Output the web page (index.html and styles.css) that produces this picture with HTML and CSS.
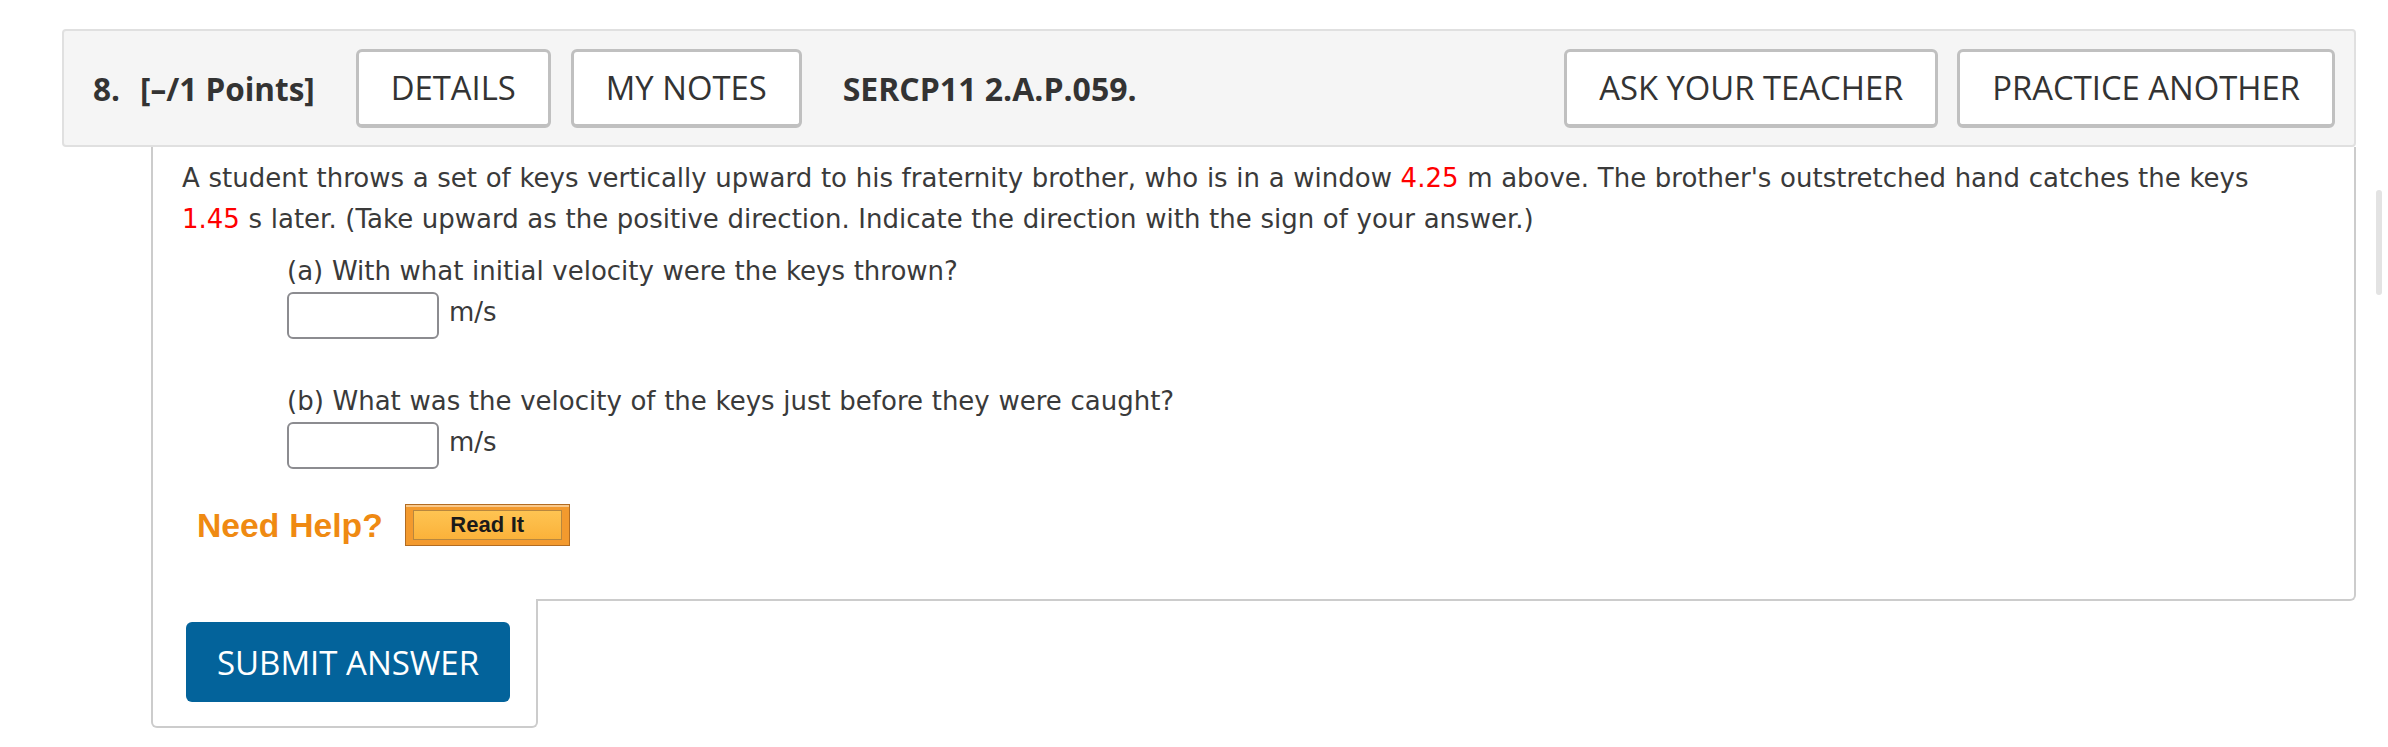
FILE: index.html
```html
<!DOCTYPE html>
<html lang="en">
<head>
<meta charset="utf-8">
<title>Question 8</title>
<link rel="stylesheet" href="styles.css">
</head>
<body>
<div class="page">
  <div class="qheader">
    <span class="qnum">8.</span>
    <span class="qpoints">[–/1 Points]</span>
    <button class="hbtn details">DETAILS</button>
    <button class="hbtn notes">MY NOTES</button>
    <span class="qid">SERCP11 2.A.P.059.</span>
    <button class="hbtn ask">ASK YOUR TEACHER</button>
    <button class="hbtn practice">PRACTICE ANOTHER</button>
  </div>
  <div class="qbody">
    <p class="stem">A student throws a set of keys vertically upward to his fraternity brother, who is in a window <span class="num">4.25</span> m above. The brother's outstretched hand catches the keys <span class="num">1.45</span> s later. (Take upward as the positive direction. Indicate the direction with the sign of your answer.)</p>
    <div class="part part-a">
      <div class="ptext">(a) With what initial velocity were the keys thrown?</div>
      <div class="answer"><span class="field"></span><span class="unit">m/s</span></div>
    </div>
    <div class="part part-b">
      <div class="ptext">(b) What was the velocity of the keys just before they were caught?</div>
      <div class="answer"><span class="field"></span><span class="unit">m/s</span></div>
    </div>
    <div class="help">
      <span class="needhelp">Need Help?</span>
      <span class="readit"><span class="readit-in">Read It</span></span>
    </div>
  </div>
  <div class="submitbox">
    <button class="submit">SUBMIT ANSWER</button>
  </div>
</div>
<div class="scrollthumb"></div>
</body>
</html>
```
FILE: styles.css
```css
html, body {
  margin: 0;
  padding: 0;
  background: #ffffff;
}

.page {
  padding: 29px 32px 0 62px;
}

.qheader {
  display: flex;
  align-items: center;
  box-sizing: border-box;
  height: 118px;
  padding: 0 19px 0 29px;
  background: #f5f5f5;
  border: 2px solid #e0e0e0;
  border-radius: 4px;
  font-family: "Open Sans", "Liberation Sans", sans-serif;
  font-size: 31.5px;
  color: #333333;
}

.qnum {
  font-weight: 700;
  margin-right: 20px;
}

.qpoints {
  font-weight: 700;
  margin-right: 41px;
}

.qid {
  font-weight: 700;
  font-size: 32px;
  margin-left: 41px;
}

.hbtn {
  box-sizing: border-box;
  height: 79px;
  padding: 0 32px;
  background: #ffffff;
  border: 3px solid #c0c0c0;
  border-bottom-width: 4px;
  border-radius: 6px;
  font-family: "Open Sans", "Liberation Sans", sans-serif;
  font-size: 32.8px;
  color: #333333;
  margin: 0;
}

.notes {
  margin-left: 20px;
}

.ask {
  margin-left: auto;
}

.practice {
  margin-left: 19px;
}

.qbody {
  margin-left: 89px;
  padding: 11px 80px 53px 29px;
  border: 2px solid #cccccc;
  border-top: none;
  border-bottom-right-radius: 6px;
  font-family: "DejaVu Sans", Verdana, sans-serif;
  font-size: 26px;
  line-height: 41px;
  word-spacing: 0.4px;
  color: #3a3a3a;
}

.stem {
  margin: 0;
}

.num {
  color: #ff0000;
}

.part {
  padding-left: 105px;
}

.part-a {
  margin-top: 11px;
}

.part-b {
  margin-top: 42px;
}

.answer {
  display: flex;
  align-items: flex-start;
}

.field {
  box-sizing: border-box;
  width: 152px;
  height: 47px;
  border: 2px solid #8c8c90;
  border-radius: 6px;
  background: #ffffff;
}

.unit {
  margin-left: 10px;
}

.help {
  display: flex;
  align-items: center;
  margin-top: 35px;
  padding-left: 15px;
}

.needhelp {
  font-family: "Liberation Sans", Arial, sans-serif;
  font-weight: 700;
  font-size: 33.7px;
  line-height: 38px;
  color: #ef8a12;
}

.readit {
  box-sizing: border-box;
  display: block;
  width: 165px;
  height: 42px;
  margin-left: 22px;
  padding: 5px 7px;
  background: #f39a2e;
  border: 1px solid #b26c22;
  box-shadow: inset 0 2px 0 #f9c98c;
}

.readit-in {
  box-sizing: border-box;
  display: block;
  height: 100%;
  background: linear-gradient(#fec452, #fbb23a);
  border: 1px solid #b8873e;
  font-family: "Liberation Sans", Arial, sans-serif;
  font-weight: 700;
  font-size: 22px;
  line-height: 28px;
  text-align: center;
  color: #1a1a1a;
}

.submitbox {
  box-sizing: border-box;
  width: 387px;
  margin-left: 89px;
  margin-top: -2px;
  padding: 23px 0 24px 33px;
  background: #ffffff;
  border: 2px solid #cccccc;
  border-top: none;
  border-radius: 0 0 6px 6px;
  position: relative;
}

.submit {
  box-sizing: border-box;
  width: 324px;
  height: 80px;
  margin: 0;
  padding: 0;
  border: none;
  border-radius: 6px;
  background: #03639b;
  color: #ffffff;
  font-family: "Open Sans", "Liberation Sans", sans-serif;
  font-size: 33px;
}

.scrollthumb {
  position: fixed;
  left: 2376px;
  top: 190px;
  width: 6px;
  height: 105px;
  border-radius: 3px;
  background: #e3e3e3;
}
```
